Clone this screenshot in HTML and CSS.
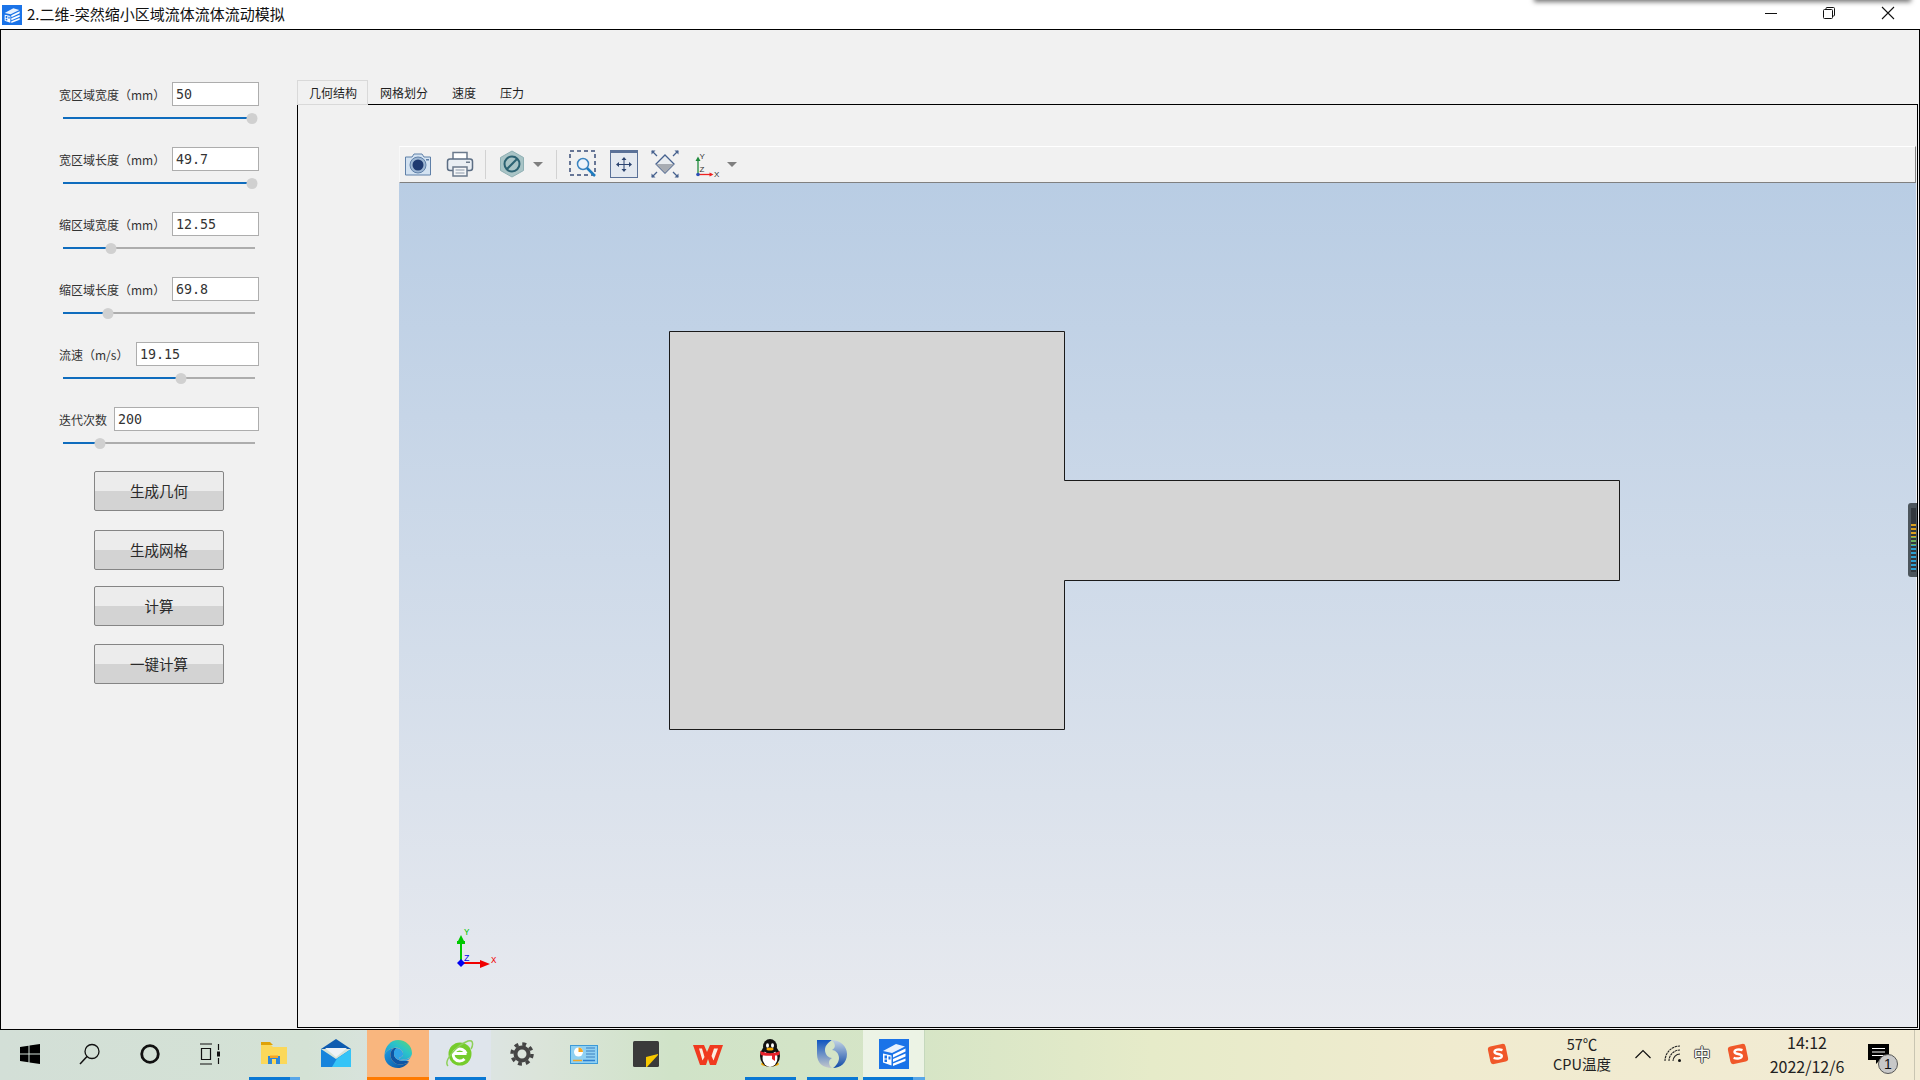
FILE: index.html
```html
<!DOCTYPE html>
<html lang="zh-CN">
<head>
<meta charset="utf-8">
<title>2.二维-突然缩小区域流体流体流动模拟</title>
<link rel="stylesheet" href="styles.css">
</head>
<body>
<svg class="defs" width="0" height="0" aria-hidden="true">
  <symbol id="app" viewBox="0 0 30 30">
    <rect width="30" height="30" fill="#1a73e8"/>
    <polygon points="4,12 17,5 26,7.5 13,14" fill="#fff" opacity=".9"/>
    <polygon points="4,14.5 12.5,16.5 12.5,26.5 4,23.5" fill="#fff"/>
    <rect x="5.5" y="16.5" width="2.5" height="3" fill="#1a73e8"/>
    <rect x="9.5" y="17.5" width="2" height="3" fill="#1a73e8"/>
    <rect x="5.5" y="20.5" width="2.5" height="2.5" fill="#1a73e8"/>
    <polygon points="14,15.5 26.5,9.5 26.5,12.5 14,18.5" fill="#fff"/>
    <polygon points="14,20 26.5,14.5 26.5,17.5 14,23" fill="#fff"/>
    <polygon points="14,24.5 26.5,19.5 26.5,22 14,27" fill="#fff"/>
  </symbol>
  <symbol id="sogou" viewBox="0 0 22 22">
    <rect x="2" y="2" width="18" height="18" rx="3" fill="#f0582a" transform="rotate(-12 11 11)"/>
    <path d="M15.5 7.2 C12 5.8 7.5 6.6 7.5 9 C7.5 11.6 14.8 10.4 14.8 13 C14.8 15.4 10 16.2 6.6 14.8" fill="none" stroke="#fff" stroke-width="2.4"/>
  </symbol>
</svg>

<div class="screen">
  <header class="titlebar">
    <div class="title-shadow"></div>
    <svg class="title-icon"><use href="#app"/></svg>
    <span class="title-text">2.二维-突然缩小区域流体流体流动模拟</span>
    <div class="win-controls">
      <div class="win-btn"><svg width="14" height="14" viewBox="0 0 14 14"><path d="M1 7.5H13" stroke="#111"/></svg></div>
      <div class="win-btn"><svg width="14" height="14" viewBox="0 0 14 14" fill="none"><rect x="1.5" y="3.5" width="9" height="9" rx="1" stroke="#111"/><path d="M4 3.5V2.5A1 1 0 0 1 5 1.5H11.5A1 1 0 0 1 12.5 2.5V9A1 1 0 0 1 11.5 10H10.5" stroke="#111"/></svg></div>
      <div class="win-btn"><svg width="14" height="14" viewBox="0 0 14 14"><path d="M1 1L13 13M13 1L1 13" stroke="#111" stroke-width="1.1"/></svg></div>
    </div>
  </header>

  <main class="window">
    <aside class="sidebar">
      <div class="param">
        <div class="param-row"><label class="param-label lw-long">宽区域宽度（mm）</label><div class="field">50</div></div>
        <div class="slider"><div class="slider-fill" style="width:189px"></div><div class="slider-handle" style="left:189px"></div></div>
      </div>
      <div class="param">
        <div class="param-row"><label class="param-label lw-long">宽区域长度（mm）</label><div class="field">49.7</div></div>
        <div class="slider"><div class="slider-fill" style="width:189px"></div><div class="slider-handle" style="left:189px"></div></div>
      </div>
      <div class="param">
        <div class="param-row"><label class="param-label lw-long">缩区域宽度（mm）</label><div class="field">12.55</div></div>
        <div class="slider"><div class="slider-fill" style="width:48px"></div><div class="slider-handle" style="left:48px"></div></div>
      </div>
      <div class="param">
        <div class="param-row"><label class="param-label lw-long">缩区域长度（mm）</label><div class="field">69.8</div></div>
        <div class="slider"><div class="slider-fill" style="width:45px"></div><div class="slider-handle" style="left:45px"></div></div>
      </div>
      <div class="param">
        <div class="param-row"><label class="param-label lw-mid">流速（m/s）</label><div class="field">19.15</div></div>
        <div class="slider"><div class="slider-fill" style="width:118px"></div><div class="slider-handle" style="left:118px"></div></div>
      </div>
      <div class="param">
        <div class="param-row"><label class="param-label lw-short">迭代次数</label><div class="field">200</div></div>
        <div class="slider"><div class="slider-fill" style="width:37px"></div><div class="slider-handle" style="left:37px"></div></div>
      </div>
      <div class="actions">
        <button class="action">生成几何</button>
        <button class="action after-19">生成网格</button>
        <button class="action after-16">计算</button>
        <button class="action after-18">一键计算</button>
      </div>
    </aside>

    <section class="tabs">
      <nav class="tab-bar">
        <div class="tab tab-active">几何结构</div>
        <div class="tab">网格划分</div>
        <div class="tab">速度</div>
        <div class="tab">压力</div>
      </nav>
      <div class="pane">
        <div class="toolbar">
          <svg class="tool" viewBox="0 0 28 28">
            <path d="M1.5 7 H8 L10 4 H18 L20 7 H26.5 V25 H1.5Z" fill="#d3e2f1" stroke="#5f80a8" stroke-linejoin="round"/>
            <circle cx="14" cy="15" r="8" fill="#9db6d2" stroke="#5f80a8"/>
            <circle cx="14" cy="15" r="5.5" fill="#1f3a70"/>
            <rect x="22" y="9" width="3" height="1.5" fill="#5f80a8"/>
          </svg>
          <svg class="tool m14" viewBox="0 0 28 28">
            <path d="M7 9V2.500H21V9" fill="#fff" stroke="#6b7a8c" stroke-width="1.5"/>
            <rect x="1.5" y="9" width="25" height="11.5" rx="2.5" fill="#e9eef3" stroke="#5c6e84" stroke-width="1.5"/>
            <rect x="7" y="17" width="14" height="9" fill="#f4f6f8" stroke="#6b7a8c" stroke-width="1.5"/>
            <path d="M9.5 20H18.5M9.5 23H18.5" stroke="#8b98a8"/>
            <rect x="20" y="11.5" width="4" height="1.5" fill="#6b7a8c"/>
          </svg>
          <div class="tool-sep m11"></div>
          <svg class="tool m12" viewBox="0 0 28 28">
            <polygon points="14,1 25.5,7.5 25.5,20.5 14,27 2.5,20.5 2.5,7.5" fill="#a9c4c6" stroke="#8fb0b4"/>
            <circle cx="14" cy="14" r="7.5" fill="none" stroke="#2c6272" stroke-width="2"/>
            <path d="M9 19L19 9" stroke="#2c6272" stroke-width="2"/>
          </svg>
          <div class="tool-arrow m7"></div>
          <div class="tool-sep m13"></div>
          <svg class="tool m12" viewBox="0 0 28 28">
            <rect x="1" y="1" width="25" height="24" fill="none" stroke="#3a4e78" stroke-width="1.5" stroke-dasharray="4 3"/>
            <circle cx="14" cy="14" r="5.5" fill="#eef4fa" stroke="#3b84c0" stroke-width="1.5"/>
            <path d="M18 18L26 26" stroke="#1e7cc0" stroke-width="2.5"/>
          </svg>
          <svg class="tool m13" viewBox="0 0 28 28">
            <rect x="0.5" y="0.5" width="27" height="27" fill="#e4e9f0" stroke="#5a7198"/>
            <rect x="1" y="1" width="26" height="2" fill="#5a7198"/>
            <path d="M14 8V21M7 14.500H21" stroke="#2c4470" stroke-width="1"/>
            <path d="M14 7L11.500 10H16.500ZM14 22L11.500 19H16.500ZM6 14.500L9 12V17ZM22 14.500L19 12V17Z" fill="#2c4470"/>
          </svg>
          <svg class="tool m13" viewBox="0 0 28 28">
            <polygon points="14,5 23,14 14,23 5,14" fill="#e9ecef" stroke="#46618e" stroke-width="1.3"/>
            <polygon points="5,14 23,14 14,23" fill="#a8acb2"/>
            <path d="M1 1L6 6M27 1L22 6M1 27L6 22M27 27L22 22" stroke="#46618e" stroke-width="1.3"/>
            <path d="M0.5 0.5H4.5L0.5 4.5ZM27.5 0.5H23.5L27.5 4.5ZM0.5 27.5H4.5L0.5 23.5ZM27.5 27.5H23.5L27.5 23.5Z" fill="#46618e"/>
          </svg>
          <svg class="tool m15" viewBox="0 0 28 28">
            <path d="M4 25V9" stroke="#1f8a3c" stroke-width="1.3"/>
            <path d="M4 6.500L1.500 11H6.500Z" fill="#1f8a3c"/>
            <path d="M4 24.500H18" stroke="#ee2222" stroke-width="1.3"/>
            <path d="M19.500 24.500L15.500 22.500V26.500Z" fill="#ee2222"/>
            <circle cx="4" cy="24.500" r="1.800" fill="#2a50b8"/>
            <text x="5.500" y="9" class="axis-letter">Y</text>
            <text x="5.500" y="22" class="axis-letter">Z</text>
            <text x="20" y="27" class="axis-letter">X</text>
          </svg>
          <div class="tool-arrow m5"></div>
        </div>
        <div class="viewport">
          <svg class="scene" viewBox="399 183 1517 844" preserveAspectRatio="none">
            <path d="M669.5 331.5H1064.5V480.5H1619.5V580.5H1064.5V729.5H669.5Z" fill="#d5d5d5" stroke="#1a1a1a"/>
            <path d="M461 963V942" stroke="#00c800" stroke-width="2"/>
            <path d="M461 935L458 941H457V944H465V941H464Z" fill="#00c800"/>
            <path d="M461 963H485" stroke="#f00000" stroke-width="2"/>
            <path d="M490 964L480 960V968Z" fill="#f00000"/>
            <path d="M461 959L465 963L461 967L457 963Z" fill="#0000f0"/>
            <text x="464" y="935" class="gizmo gz-y">Y</text>
            <text x="464" y="961" class="gizmo gz-z">Z</text>
            <text x="491" y="963" class="gizmo gz-x">X</text>
          </svg>
          <div class="meter"><div class="meter-bars"></div></div>
        </div>
      </div>
    </section>
  </main>

  <footer class="taskbar">
    <div class="tb-left">
      <div class="slot-sys"><svg width="20" height="20" viewBox="0 0 20 20"><path d="M0 3L8.5 1.800V9.5H0ZM9.5 1.600L20 0V9.5H9.5ZM0 10.5H8.5V18.200L0 17ZM9.5 10.5H20V20L9.5 18.400Z" fill="#000"/></svg></div>
      <div class="slot-sys"><svg width="22" height="22" viewBox="0 0 22 22" fill="none"><circle cx="13" cy="8.5" r="7" stroke="#111" stroke-width="1.3"/><path d="M8 13.5L1 21" stroke="#111" stroke-width="1.5"/></svg></div>
      <div class="slot-sys"><svg width="22" height="22" viewBox="0 0 22 22" fill="none"><circle cx="11" cy="11" r="8.3" stroke="#111" stroke-width="2.8"/></svg></div>
      <div class="slot-sys"><svg width="22" height="22" viewBox="0 0 22 22" fill="none" stroke="#111" stroke-width="1.2"><path d="M1 1H13M1 21H13M2.5 5.5H11.5V16.5H2.5ZM19.5 1V7M19.5 15V21"/><rect x="18" y="8.5" width="3" height="5" fill="#111" stroke="none"/></svg></div>
    </div>
    <div class="slot slot-run">
      <svg width="30" height="30" viewBox="0 0 30 30"><path d="M2 5H11L14 8H28V25H2Z" fill="#fbd85a"/><path d="M2 3H11L14 6H2Z" fill="#dfa208"/><path d="M9 17H21V25H17V20H13V25H9Z" fill="#2d86d8"/><path d="M11 16.500H19V19H11Z" fill="#f5a623"/></svg>
      <div class="run-mark split"></div>
    </div>
    <div class="slot">
      <svg width="30" height="30" viewBox="0 0 30 30"><path d="M0 10L15 0L30 10Z" fill="#0f5cb0"/><path d="M4 9H26L15 18Z" fill="#eef2f6"/><path d="M0 10L15 20L30 10V28H0Z" fill="#1684dc"/><path d="M30 10V28H11L16 19.500Z" fill="#35c4f7"/></svg>
    </div>
    <div class="slot slot-hot">
      <svg width="30" height="30" viewBox="0 0 30 30"><defs><linearGradient id="edgeA" x1="0" y1="1" x2="1" y2="0"><stop offset="0" stop-color="#1b8fe0"/><stop offset=".6" stop-color="#2bc4c8"/><stop offset="1" stop-color="#5fd86a"/></linearGradient><linearGradient id="edgeB" x1="0" y1="0" x2="1" y2="1"><stop offset="0" stop-color="#1d9fe6"/><stop offset="1" stop-color="#0b4d9a"/></linearGradient></defs><path d="M1.5 16C2 7 8 1 15 1C23 1 29 7 29 14C29 18 25 20.5 21 20.5C18 20.5 16 19.5 16 18.5C19 18.5 20.5 16.5 20 14C19 10 15 8 11 9C6 10 2.5 13 1.5 16Z" fill="url(#edgeA)"/><path d="M1.5 16C2.5 13 6 10 11 9C8 11 7 14 7.5 17C8.5 23 14 27 21 25C23.5 24.5 25 23.5 26 22.500C23.5 26.5 19.5 29 15 29C7 29 1 23 1.5 16Z" fill="url(#edgeB)"/><path d="M11 9C8 11 7 14 7.5 17C8.5 23 14 27 21 25C23.5 24.5 25 23.5 26 22.500C25 21.5 23 22 21 22C15 22 11 19 11 15C11 12.500 12 10.500 14 9Z" fill="#0d55a5"/><path d="M14 9C11 10.5 11 12.500 11 15C11 19 15 22 21 22C25 22 27 20 28.5 17C27 19.5 24.5 20.5 21 20.5C18 20.5 16 19.5 16 18.5C19 18.5 20.5 16.5 20 14C19 11 17 9.5 14 9Z" fill="#2fa3e8"/></svg>
      <div class="run-mark hot"></div>
    </div>
    <div class="slot slot-soft">
      <svg width="30" height="30" viewBox="0 0 30 30" fill="none"><circle cx="15" cy="15" r="11.500" fill="#76cc2c"/><path d="M8.500 14.500H21.500M21 14.500A6.500 6 0 1 0 19.500 20" stroke="#fff" stroke-width="3"/><path d="M3 27C-2 22 12 6 23 2C29 0 28 7 26 10" stroke="#8ed05a" stroke-width="1.500"/></svg>
      <div class="run-mark"></div>
    </div>
    <div class="slot">
      <svg width="24" height="24" viewBox="0 0 24 24" fill="none"><circle cx="12" cy="12" r="6.5" stroke="#454545" stroke-width="4"/><circle cx="12" cy="12" r="10" stroke="#454545" stroke-width="3.5" stroke-dasharray="3.900 3.950"/></svg>
    </div>
    <div class="slot">
      <svg width="30" height="30" viewBox="0 0 30 30"><rect x="1.5" y="6.500" width="27" height="18" fill="#8fd0f2" stroke="#3c9ad8"/><circle cx="9.500" cy="13" r="4.500" fill="#fff"/><path d="M9.500 13V8.500A4.500 4.500 0 0 1 14 13Z" fill="#f5a623"/><path d="M17 9H26M17 12H26M17 15H26M17 18H26" stroke="#3a7fc0"/><path d="M4 21.500H13" stroke="#f5a623" stroke-width="1.500"/><path d="M14 21.500H26" stroke="#2f7fd0" stroke-width="1.500"/></svg>
    </div>
    <div class="slot">
      <svg width="26" height="26" viewBox="0 0 26 26"><rect width="26" height="26" rx="1.500" fill="#3a3a3a"/><polygon points="13,16 25,13 25,14 14,26 13,26" fill="#f7c800"/></svg>
    </div>
    <div class="slot">
      <svg width="30" height="30" viewBox="0 0 30 30"><path d="M0 6H11L14 13L17 6H30L23 26H17L15 20L13 26H7Z" fill="#f03a1f"/><path d="M6 9.5H9L11.5 18L9.5 21.5ZM21 9.5H25L20.5 21.5L18.5 17Z" fill="#fbeee0"/></svg>
    </div>
    <div class="slot slot-run">
      <svg width="26" height="30" viewBox="0 0 26 30"><ellipse cx="13" cy="25" rx="9" ry="2.5" fill="#f5a800"/><ellipse cx="13" cy="17" rx="10" ry="11" fill="#111"/><ellipse cx="13" cy="19" rx="7.5" ry="9" fill="#fff"/><ellipse cx="13" cy="7.5" rx="7" ry="7.5" fill="#111"/><ellipse cx="10.5" cy="6.5" rx="1.5" ry="2.2" fill="#fff"/><ellipse cx="15.5" cy="6.5" rx="1.5" ry="2.2" fill="#fff"/><ellipse cx="13" cy="10" rx="3.5" ry="1.5" fill="#f5a800"/><path d="M3 12C9 15 17 15 23 12L22 16C20 16.5 19 16.5 18 16.5V22L15 20V16.8H9C7 16.8 5 16.5 4 16Z" fill="#e6212a"/></svg>
      <div class="run-mark"></div>
    </div>
    <div class="slot slot-run">
      <svg width="30" height="30" viewBox="0 0 30 30"><defs><linearGradient id="swirlA" x1="0" y1="0" x2="0" y2="1"><stop offset="0" stop-color="#0f56c0"/><stop offset="1" stop-color="#c4c8cc"/></linearGradient><linearGradient id="swirlB" x1="0" y1="0" x2="0" y2="1"><stop offset="0" stop-color="#c4d4e4"/><stop offset="1" stop-color="#0f4aa8"/></linearGradient></defs><path d="M0 1H15C12 3 8 6 8 11C8 16 12 19 15 19C11 21 11 26 15 29C6 29 0 24 0 15Z" fill="url(#swirlA)"/><path d="M14 1C23 1 30 7 30 15C30 24 23 29 16 29C19 27 22 23 22 19C22 14 18 11 15 11C19 9 19 4 14 1Z" fill="url(#swirlB)"/></svg>
      <div class="run-mark"></div>
    </div>
    <div class="slot slot-open">
      <svg width="30" height="30"><use href="#app"/></svg>
      <div class="run-mark full split"></div>
    </div>

    <div class="tray">
      <svg class="tray-s" width="22" height="22"><use href="#sogou"/></svg>
      <div class="tray-temp"><span>57℃</span><span>CPU温度</span></div>
      <div class="tray-icon t-caret"><svg width="16" height="16" viewBox="0 0 16 16" fill="none"><path d="M0.5 12L8 4.5L15.5 12" stroke="#111" stroke-width="1.2"/></svg></div>
      <div class="tray-icon"><svg width="18" height="18" viewBox="0 0 18 18" fill="none" stroke="#222" stroke-width="1.1" stroke-dasharray="2.4 .6"><path d="M1 16A15 15 0 0 1 16 1"/><path d="M5 16A11 11 0 0 1 16 5"/><path d="M9 16A7 7 0 0 1 16 9" stroke-dasharray="none"/><circle cx="15.5" cy="15.5" r="1.5" fill="#111" stroke="none"/></svg></div>
      <div class="tray-icon t-ime">中</div>
      <svg class="tray-s2" width="22" height="22"><use href="#sogou"/></svg>
      <div class="tray-clock"><span>14:12</span><span>2022/12/6</span></div>
      <div class="tray-notify">
        <svg width="22" height="22" viewBox="0 0 22 22"><path d="M0 1H21V17H12L8 21V17H0Z" fill="#000"/><path d="M4 5.5H17M4 9H17M4 12.5H17" stroke="#fff" stroke-width="1.2"/></svg>
        <span class="badge">1</span>
      </div>
      <div class="show-desktop"></div>
    </div>
  </footer>
</div>
</body>
</html>
```

FILE: styles.css
```css
* { box-sizing: border-box; }
html, body { margin: 0; padding: 0; }
body { font-family: "Noto Sans CJK SC", "Noto Sans", sans-serif; background: #f1f1f1; color: #222; overflow: hidden; }
.defs { display: block; position: absolute; }
.screen { width: 1920px; height: 1080px; display: flex; flex-direction: column; }

/* title bar */
.titlebar { position: relative; height: 29px; flex: none; background: #fff; display: flex; align-items: center; padding-left: 2px; overflow: hidden; }
.title-shadow { position: absolute; left: 1535px; width: 375px; top: -10px; height: 10px; background: #ccc; box-shadow: 0 1px 5px 1px rgba(0,0,0,.55); }
.title-icon { width: 20px; height: 20px; flex: none; }
.title-text { margin-left: 5px; font-size: 15px; line-height: 27px; margin-bottom: 2px; color: #111; }
.win-controls { margin-left: auto; margin-right: 3px; display: flex; }
.win-btn { width: 58.5px; height: 29px; display: flex; align-items: center; justify-content: center; padding-bottom: 3px; }

/* window */
.window { height: 1001px; flex: none; border: 1px solid #000; background: #f1f1f1; display: flex; }
.sidebar { width: 296px; flex: none; padding: 52px 0 0 58px; }
.param + .param { margin-top: 28px; }
.param-row { width: 200px; height: 24px; display: flex; align-items: center; }
.param-label { flex: none; padding-top: 2px; font-size: 12px; line-height: 24px; color: #333; white-space: nowrap; }
.lw-long { width: 113px; }
.lw-mid { width: 77px; }
.lw-short { width: 55px; }
.field { flex: 1; height: 24px; background: #fff; border: 1px solid #adadad; padding: 1px 0 0 3px; font-family: "DejaVu Sans Mono", "Liberation Mono", monospace; font-size: 13.33px; line-height: 22px; color: #333; }
.slider { position: relative; width: 192px; height: 2px; margin: 11px 0 0 4px; background: #adadad; }
.slider-fill { height: 2px; background: #0f6cbd; }
.slider-handle { position: absolute; top: -4px; width: 11px; height: 11px; border-radius: 50%; background: #d0d0d0; transform: translateX(-50%); }

.actions { margin: 27px 0 0 35px; display: flex; flex-direction: column; align-items: flex-start; }
.action { width: 130px; height: 40px; padding: 0 0 2px; border: 1px solid #858585; border-radius: 2px; background: linear-gradient(to bottom, #ececec 0 50%, #d3d3d3 50% 100%); font-family: inherit; font-size: 14.5px; color: #2a2a2a; }
.after-19 { margin-top: 19px; }
.after-16 { margin-top: 16px; }
.after-18 { margin-top: 18px; }

/* tabs */
.tabs { flex: 1; min-width: 0; display: flex; flex-direction: column; padding: 50px 1px 1px 0; }
.tab-bar { height: 24px; flex: none; display: flex; }
.tab { padding: 1px 12px 0; font-size: 12px; line-height: 24px; color: #1f1f1f; white-space: nowrap; }
.tab-active { width: 71px; height: 25px; padding: 1px 0 0 11px; background: #f1f1f1; border: 1px solid #d9d9d9; line-height: 22px; position: relative; z-index: 1; }
.pane { flex: 1; min-height: 0; border: 1px solid #000; padding: 41px 0 0 101px; display: flex; flex-direction: column; }
.toolbar { height: 37px; flex: none; display: flex; align-items: center; margin-right: 1px; padding: 0 0 1px 4px; background: #f1f1f1; border-top: 1px solid #fff; border-left: 1px solid #f8f8f8; border-right: 1px solid #808080; border-bottom: 1px solid #808080; }
.tool { width: 28px; height: 28px; flex: none; }
.tool-sep { width: 1px; height: 29px; flex: none; background: #d2d2d2; }
.tool-arrow { width: 0; height: 0; flex: none; border-left: 5px solid transparent; border-right: 5px solid transparent; border-top: 5px solid #7f7f7f; }
.m5 { margin-left: 5px; }
.m7 { margin-left: 7px; }
.m11 { margin-left: 11px; }
.m12 { margin-left: 12px; }
.m13 { margin-left: 13px; }
.m14 { margin-left: 14px; }
.m15 { margin-left: 15px; }
.axis-letter { font-family: "Liberation Sans", sans-serif; font-size: 8px; fill: #333; }

.viewport { position: relative; flex: 1; min-height: 0; margin-right: 1px; background: linear-gradient(to bottom, #b9cde4 0%, #e8eaef 100%); }
.scene { display: block; width: 100%; height: 100%; }
.gizmo { font-family: "Liberation Mono", monospace; font-size: 9px; }
.gz-y { fill: #00c800; }
.gz-z { fill: #0000f0; }
.gz-x { fill: #f00000; }
.meter { position: absolute; right: -1px; top: 320px; width: 9px; height: 74px; background: #4c555c; border-radius: 3px 0 0 3px; padding: 5px 0 5px 3px; }
.meter-bars { width: 5px; height: 64px; background:
  repeating-linear-gradient(to bottom, transparent 0 2px, #32383e 2px 4px),
  linear-gradient(to bottom, #32383e 0 22%, #d8a020 22% 45%, #6cb060 45% 58%, #2d9fd0 58% 100%); }

/* taskbar */
.taskbar { height: 50px; flex: none; display: flex; background: linear-gradient(to right, #d3dfd7 0%, #d4e2d5 16%, #dde4e6 24%, #dbe4da 28%, #d0e3c8 35%, #d6e5c6 48%, #e6ebc9 60%, #f0ebcf 75%, #f2ebd4 100%); }
.tb-left { width: 243px; flex: none; display: flex; }
.slot-sys { width: 60px; height: 50px; display: flex; align-items: center; justify-content: center; padding-bottom: 2px; }
.slot { position: relative; width: 62px; height: 50px; flex: none; display: flex; align-items: center; justify-content: center; padding-bottom: 2px; }
.slot-hot { background: #f9b67e; }
.slot-soft { background: #dfe5ec; }
.slot-open { background: rgba(255,255,255,.55); border-right: 1px solid #c5d8bd; }
.run-mark { position: absolute; left: 6px; right: 5px; bottom: 0; height: 3px; background: #0a78d4; }
.run-mark.hot { left: 0; right: 0; background: #ff7a00; }
.run-mark.full { left: 0; right: -1px; }
.run-mark.split { background: linear-gradient(to right, #0a78d4 80%, #58a6e8 80%); }

.tray { margin-left: auto; display: flex; align-items: center; height: 50px; padding-bottom: 3px; }
.tray-s { flex: none; }
.tray-temp { width: 60px; margin-left: 43px; display: flex; flex-direction: column; align-items: center; font-size: 14.5px; line-height: 20px; color: #222; white-space: nowrap; }
.tray-icon { width: 30px; height: 30px; flex: none; display: flex; align-items: center; justify-content: center; }
.t-caret { margin-left: 16px; }
.t-ime { width: 28px; font-size: 17px; color: #fff; text-shadow: -1px 0 #444, 1px 0 #444, 0 -1px #444, 0 1px #444; }
.tray-s2 { flex: none; margin-left: 11px; }
.tray-clock { width: 84px; margin-left: 16px; display: flex; flex-direction: column; align-items: center; font-size: 16px; line-height: 24px; color: #222; white-space: nowrap; }
.tray-notify { position: relative; width: 60px; height: 30px; display: flex; align-items: center; justify-content: center; }
.badge { position: absolute; left: 29px; top: 15px; width: 20px; height: 20px; border-radius: 50%; background: #c8c8c8; border: 1px solid #555; font-family: "Liberation Sans", sans-serif; font-size: 14px; line-height: 18px; text-align: center; color: #111; }
.show-desktop { width: 1px; height: 50px; margin: 3px 5px 0 5px; background: #c9c5b2; align-self: center; }
```
